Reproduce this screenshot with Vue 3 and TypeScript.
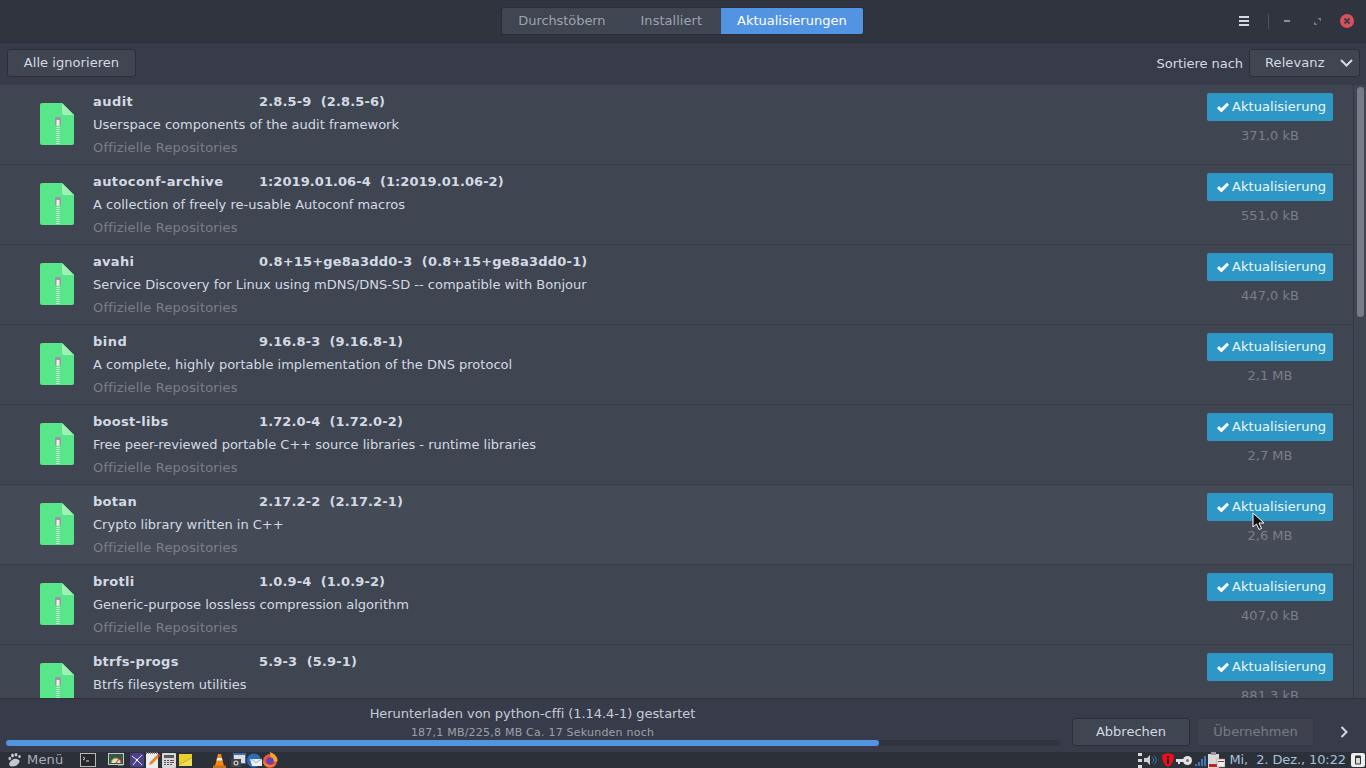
<script setup lang="ts">
interface Pkg { name: string; ver: string; desc: string; size: string; vs: number; ns?: number; hover?: boolean }
const pkgs: Pkg[] = [
  { name: 'audit', ver: '2.8.5-9  (2.8.5-6)', desc: 'Userspace components of the audit framework', size: '371,0 kB', vs: 0.13, ns: 0.45 },
  { name: 'autoconf-archive', ver: '1:2019.01.06-4  (1:2019.01.06-2)', desc: 'A collection of freely re-usable Autoconf macros', size: '551,0 kB', vs: 0.06, ns: 0.42 },
  { name: 'avahi', ver: '0.8+15+ge8a3dd0-3  (0.8+15+ge8a3dd0-1)', desc: 'Service Discovery for Linux using mDNS/DNS-SD -- compatible with Bonjour', size: '447,0 kB', vs: 0.2 },
  { name: 'bind', ver: '9.16.8-3  (9.16.8-1)', desc: 'A complete, highly portable implementation of the DNS protocol', size: '2,1 MB', vs: 0.1, ns: 0.5 },
  { name: 'boost-libs', ver: '1.72.0-4  (1.72.0-2)', desc: 'Free peer-reviewed portable C++ source libraries - runtime libraries', size: '2,7 MB', vs: 0.1 },
  { name: 'botan', ver: '2.17.2-2  (2.17.2-1)', desc: 'Crypto library written in C++', size: '2,6 MB', vs: 0.1, hover: true },
  { name: 'brotli', ver: '1.0.9-4  (1.0.9-2)', desc: 'Generic-purpose lossless compression algorithm', size: '407,0 kB', vs: 0.13 },
  { name: 'btrfs-progs', ver: '5.9-3  (5.9-1)', desc: 'Btrfs filesystem utilities', size: '881,3 kB', vs: 0.16 },
]
</script>

<template>
  <div class="app">
    <header class="titlebar">
      <div class="tabs">
        <span class="tab t1">Durchstöbern</span>
        <span class="tab t2">Installiert</span>
        <span class="tab active">Aktualisierungen</span>
      </div>
      <div class="winctl">
        <svg class="w-menu" width="10" height="10" viewBox="0 0 10 10"><path d="M0 1h10M0 5h10M0 9h10" stroke="#d3dae3" stroke-width="2" /></svg>
        <i class="sep"></i>
        <svg class="w-min" width="6" height="4" viewBox="0 0 6 4"><rect y="1" width="6" height="2" fill="#8a8f99" /></svg>
        <svg class="w-max" width="7" height="7" viewBox="0 0 7 7"><path d="M3.500 0H7v3.500zM0 3.500L3.500 7H0z" fill="#777c85" /></svg>
        <svg width="14" height="14" viewBox="0 0 14 14"><circle cx="7" cy="7" r="7" fill="#d9505a" /><path d="M4.500 4.500l5 5M9.500 4.500l-5 5" stroke="#3a3f4b" stroke-width="2" /></svg>
      </div>
    </header>

    <div class="toolbar">
      <button class="btn ignore">Alle ignorieren</button>
      <div class="sort">
        <span class="sortlabel">Sortiere nach</span>
        <div class="btn select">
          <span class="rel">Relevanz</span>
          <svg width="13" height="8" viewBox="0 0 13 8"><path d="M1 1l5.500 5.500L12 1" fill="none" stroke="#d3dae3" stroke-width="2" /></svg>
        </div>
      </div>
    </div>

    <main class="listwrap">
      <div class="list">
        <div v-for="p in pkgs" :key="p.name" class="row" :class="{ hover: p.hover }">
          <svg class="pkgicon" width="34" height="42" viewBox="0 0 34 42">
            <path d="M2 0H22L34 12V40a2 2 0 0 1-2 2H2a2 2 0 0 1-2-2V2a2 2 0 0 1 2-2z" fill="#58e68a" />
            <path d="M22 0L34 12H24a2 2 0 0 1-2-2z" fill="#a0f0b8" />
            <rect x="15" y="14" width="6" height="8" fill="#9a9a9a" />
            <rect x="16.500" y="17" width="3" height="5" fill="#eee" />
            <path d="M18 22V41" stroke="#d5dcd8" stroke-width="3.500" stroke-dasharray="1 1" />
          </svg>
          <div class="info">
            <div class="head">
              <b class="name" :style="{ letterSpacing: (p.ns ?? 0.3) + 'px' }">{{ p.name }}</b>
              <b class="ver" :style="{ letterSpacing: p.vs + 'px' }">{{ p.ver }}</b>
            </div>
            <div class="desc">{{ p.desc }}</div>
            <div class="repo">Offizielle Repositories</div>
          </div>
          <div class="action">
            <div class="update">
              <svg width="12" height="10" viewBox="0 0 12 10"><path d="M1 5.200l3.400 3.200L11 1.700" fill="none" stroke="#fff" stroke-width="3" /></svg>
              <span>Aktualisierung</span>
            </div>
            <div class="size">{{ p.size }}</div>
          </div>
        </div>
      </div>
      <div class="scroll"><div class="thumb"></div></div>
      <svg class="cursor" width="13" height="18" viewBox="0 0 13 18"><path d="M1 1v14l3.500-3 2.500 5.500 2.500-1L7 11h5z" fill="#111" stroke="#fff" stroke-width="1" /></svg>
    </main>

    <footer class="footer">
      <div class="progressinfo">
        <div class="status">
          <div class="st1">Herunterladen von python-cffi (1.14.4-1) gestartet</div>
          <div class="st2">187,1 MB/225,8 MB Ca. 17 Sekunden noch</div>
        </div>
        <div class="bar"><div class="fill" :style="{ width: '82.800%' }"></div></div>
      </div>
      <div class="actions">
        <button class="btn cancel">Abbrechen</button>
        <button class="btn apply">Übernehmen</button>
        <svg width="9" height="12" viewBox="0 0 9 12"><path d="M1.500 1l5 5-5 5" fill="none" stroke="#d3dae3" stroke-width="2" /></svg>
      </div>
    </footer>

    <nav class="taskbar">
      <svg class="ti paw" width="13" height="14" viewBox="0 0 13 14"><path d="M4 13.500c-3 0-3.500-2.500-2-4.500s4-4 7-3 3 2.500 1.500 4.500-3 3-6.500 3z" fill="#c4c8cd" /><ellipse cx="1.800" cy="5.500" rx="1.300" ry="1.800" fill="#c4c8cd" /><ellipse cx="4.500" cy="2.500" rx="1.400" ry="2" fill="#c4c8cd" /><ellipse cx="8" cy="1.800" rx="1.500" ry="1.800" fill="#c4c8cd" /><ellipse cx="11.500" cy="3.500" rx="1.300" ry="1.500" fill="#c4c8cd" /></svg>
      <span class="menu">Menü</span>
      <svg class="ti term" width="16" height="14" viewBox="0 0 16 14"><rect x=".5" y=".5" width="15" height="13" fill="#24282c" stroke="#b8b8b8" /><path d="M3 4l2 1.500L3 7M6 8h3" fill="none" stroke="#ddd" /></svg>
      <svg class="ti gauge" width="16" height="14" viewBox="0 0 16 14"><rect width="16" height="12" fill="#c8c8c8" /><rect x="1" y="1" width="14" height="10" fill="#35574a" /><path d="M3 10a5 5 0 0 1 10 0z" fill="#e8ddb0" /><path d="M3 10a5 5 0 0 1 5-5" fill="none" stroke="#6b9a4a" /><path d="M8 5a5 5 0 0 1 5 5" fill="none" stroke="#c8503c" /><path d="M8 10l3-4" stroke="#a33" /><rect x="10" y="12" width="5" height="1" fill="#777" /></svg>
      <svg class="ti net" width="14" height="14" viewBox="0 0 14 14"><rect width="14" height="14" rx="2" fill="#4e3f8c" /><path d="M2 3l5 4 5-5M7 7l-4 5M7 7l5 5" stroke="#e6e6f0" fill="none" /><circle cx="7" cy="7" r="1.200" fill="#fff" /></svg>
      <svg class="ti note" width="15" height="16" viewBox="0 0 15 16"><rect x="0" y="1" width="12" height="15" fill="#ededed" /><path d="M0 1h12" stroke="#777" stroke-width="2" stroke-dasharray="1 1" /><path d="M3 13l1-3 7-7 2 2-7 7z" fill="#e08a2c" /><path d="M11 3l1.500-1.500 2 2L13 5z" fill="#d83a3a" /></svg>
      <svg class="ti calc" width="14" height="15" viewBox="0 0 14 15"><rect width="14" height="15" rx="1" fill="#d8d8d8" /><rect x="2" y="2" width="10" height="3" fill="#5a5a5a" /><path d="M2 7.500h2m1 0h2m1 0h2m-8 2h2m1 0h2m1 0h2m-8 2h2m1 0h2m1 0h2" stroke="#555" /><path d="M10 7.500h2M10 9.500h2" stroke="#a33" /></svg>
      <svg class="ti sticky" width="13" height="12" viewBox="0 0 13 12"><rect width="13" height="12" fill="#e8cf2e" /><path d="M0 11L13 4" stroke="#9c8a1c" /><path d="M0 11l13-7v8H0z" fill="#f0dd58" /></svg>
      <svg class="ti vlc" width="13" height="15" viewBox="0 0 13 15"><path d="M5 1h3L11 13H2z" fill="#f08a1c" /><path d="M4.200 5h4.600l.6 2.500H3.600z" fill="#f4f0e8" /><path d="M0 12.500h13V15H0z" fill="#c8701a" /></svg>
      <svg class="ti cam" width="15" height="15" viewBox="0 0 15 15"><rect x="2" y="0" width="13" height="11" fill="#3a6ea8" /><rect x="3" y="2" width="11" height="8" fill="#ddd" /><rect y="6" width="10" height="8" fill="#444" /><circle cx="5" cy="10" r="2.500" fill="#ccc" /><circle cx="5" cy="10" r="1.200" fill="#333" /></svg>
      <svg class="ti bird" width="15" height="15" viewBox="0 0 15 15"><circle cx="7" cy="7.500" r="7" fill="#2c6fb8" /><path d="M3 6h12v7H5z" fill="#eaf0f6" /><path d="M4 6l5 3.500L15 6" fill="none" stroke="#9eb4c8" /></svg>
      <svg class="ti fox" width="16" height="16" viewBox="0 0 16 16"><circle cx="8" cy="9" r="7" fill="#e8583a" /><path d="M8 0c4 1.500 8 4.500 7.500 9.500H9z" fill="#f6a52e" /><circle cx="8" cy="9" r="3.800" fill="#6b3fa8" /><path d="M1 9c0 3 2 6 7 6 3 0 5-1 6-3-3 2-9 2-13-3z" fill="#f08030" /></svg>
      <div class="spacer"></div>
      <div class="tray">
        <svg width="4" height="15" viewBox="0 0 4 15"><path d="M2 0v15" stroke="#d8d8d8" stroke-width="4" stroke-dasharray="3 3" /></svg>
        <svg class="tr-sp" width="13" height="12" viewBox="0 0 13 12"><path d="M0 4h3l3-3v10L3 8H0z" fill="#cfcfcf" /><path d="M8 3c2 2 2 4 0 6M10 1.500c3 3 3 6 0 9" fill="none" stroke="#3f78b8" /></svg>
        <svg class="tr-sh" width="12" height="14" viewBox="0 0 12 14"><path d="M6 0l6 2c0 6-2 10-6 12C2 12 0 8 0 2z" fill="#e8101c" /><path d="M5 3h2v2H5zM5 6h2v5H5z" fill="#2a0a0a" /></svg>
        <svg class="tr-key" width="16" height="9" viewBox="0 0 16 9"><circle cx="11.500" cy="4.500" r="4.500" fill="#e4e4e4" /><circle cx="11.500" cy="4.500" r="1.500" fill="#777" /><rect y="3" width="9" height="3" fill="#e4e4e4" /><rect x="2" y="5" width="2" height="3" fill="#e4e4e4" /></svg>
        <svg class="tr-sig" width="11" height="11" viewBox="0 0 11 11"><path d="M0 9h2v2H0zM3 7h2v4H3zM6 4h2v7H6zM9 1h2v10H9z" fill="#3f78b8" /></svg>
        <svg class="tr-clip" width="17" height="16" viewBox="0 0 17 16"><rect y="2" width="11" height="14" fill="#d8d8d8" /><rect x="3" y="0" width="5" height="3" fill="#999" /><rect x="1" y="12" width="9" height="3" fill="#c02020" /><rect x="9" y="7" width="8" height="8" fill="#eee" stroke="#888" stroke-width=".5" /><rect x="10" y="9" width="6" height="1" fill="#a33" /></svg>
        <span class="clock">Mi,&nbsp;&nbsp;2. Dez., 10:22</span>
        <svg class="tr-tr" width="14" height="14" viewBox="0 0 14 14"><rect width="14" height="14" rx="2" fill="#eee" /><rect x="4" y="2.500" width="6" height="9" rx="1" fill="#333" /><rect x="5" y="5" width="4" height="5.500" fill="#ddd" /></svg>
      </div>
    </nav>
  </div>
</template>

<style scoped>
.app {
  width: 1366px;
  height: 768px;
  display: flex;
  flex-direction: column;
  overflow: hidden;
  background: #383c4a;
  color: #d3dae3;
  font: 13px/16px "DejaVu Sans", sans-serif;
}
.titlebar {
  flex: 0 0 43px;
  box-sizing: border-box;
  position: relative;
  display: flex;
  justify-content: center;
  align-items: flex-start;
  padding-top: 8px;
  background: #2f343f;
  border-bottom: 1px solid #2b2e39;
}
.tabs {
  display: flex;
  height: 26px;
  background: #404552;
  border-radius: 2px;
  box-shadow: 0 0 0 1px #2b2e39;
  color: #9da3ad;
  margin-left: -1px;
}
.tab { line-height: 16px; padding-top: 5px; padding-bottom: 5px; }
.t1 { padding-left: 16px; padding-right: 18px; letter-spacing: -.08px; }
.t2 { padding-left: 17px; padding-right: 19px; letter-spacing: .03px; }
.tab.active { padding-left: 16px; padding-right: 16px; background: #5294e2; color: #fff; border-radius: 0 2px 2px 0; }
.winctl {
  position: absolute;
  right: 12px;
  top: 14px;
  height: 14px;
  display: flex;
  align-items: center;
}
.w-menu { margin-right: 19px; }
.sep { width: 1px; height: 15px; background: #4c515c; margin-right: 15px; }
.w-min { margin-right: 24px; }
.w-max { margin-right: 19px; }

.toolbar {
  flex: 0 0 42px;
  box-sizing: border-box;
  display: flex;
  justify-content: space-between;
  align-items: flex-start;
  padding: 6px 6px 0 7px;
  background: #383c4a;
}
.btn {
  box-sizing: border-box;
  background: #404552;
  border: 1px solid #2b2e39;
  border-radius: 3px;
  color: #d3dae3;
  font: inherit;
  padding: 0;
}
.ignore { width: 129px; height: 28px; letter-spacing: .05px; }
.sort { display: flex; align-items: center; gap: 6px; }
.sortlabel { padding-top: 1px; letter-spacing: -.05px; }
.select {
  width: 111px;
  height: 28px;
  display: flex;
  align-items: center;
  justify-content: space-between;
  padding: 0 6px 0 15px;
}
.rel { letter-spacing: .1px; }

.listwrap {
  flex: 0 0 614px;
  position: relative;
  display: flex;
  overflow: hidden;
  background: #404552;
  border-bottom: 1px solid #2f323d;
  box-sizing: border-box;
}
.list { flex: 1; min-width: 0; }
.row {
  box-sizing: border-box;
  height: 80px;
  display: flex;
  padding: 0 20px 0 40px;
  border-bottom: 1px solid #383c48;
}
.row.hover { background: #454a57; }
.pkgicon { flex: none; margin-top: 18px; }
.info { flex: 1; margin-left: 19px; padding-top: 9px; }
.head { display: flex; height: 23px; }
.name { width: 166px; font-weight: 700; }
.ver { font-weight: 700; white-space: pre; }
.desc { height: 23px; letter-spacing: .005px; }
.repo { color: #7b7f88; letter-spacing: .18px; }
.action { flex: none; width: 126px; padding-top: 8px; text-align: center; }
.update {
  height: 28px;
  display: flex;
  align-items: center;
  gap: 3px;
  padding-left: 10px;
  border-radius: 2px;
  background: #2d98c5;
  color: #eef6fa;
  letter-spacing: .05px;
}
.size { margin-top: 7px; color: #7b7f88; }
.scroll {
  flex: 0 0 13px;
  box-sizing: border-box;
  border-left: 1px solid #353945;
  background: #404552;
}
.thumb {
  width: 7px;
  height: 230px;
  margin: 2px 0 0 3px;
  border-radius: 4px;
  background: #767b87;
}
.cursor { position: absolute; left: 1252px; top: 427px; }

.footer {
  flex: 0 0 53px;
  display: flex;
  background: #383c4a;
}
.progressinfo { width: 1066px; padding-left: 6px; box-sizing: border-box; }
.status { height: 35px; padding: 6px 7px 0 0; text-align: center; }
.st1 { color: #c6ccd6; line-height: 18px; letter-spacing: -.06px; }
.st2 { margin-top: 1px; color: #9ba1ab; font-size: 11px; line-height: 18px; letter-spacing: .22px; }
.bar { width: 1054px; height: 6px; border-radius: 3px; background: #2f343f; }
.fill { height: 100%; border-radius: 3px; background: #5294e2; }
.actions { display: flex; align-items: flex-start; padding: 19px 0 0 6px; }
.cancel { width: 118px; height: 28px; }
.apply { width: 117px; height: 28px; margin-left: 7px; color: #767b87; border-color: #363a47; background: #3e424f; }
.actions svg { margin: 8px 0 0 26px; }

.taskbar {
  flex: 0 0 16px;
  display: flex;
  align-items: center;
  background: #2c3038;
  color: #a9b0ba;
}
.ti { flex: none; }
.paw { margin-left: 8px; }
.menu { margin-left: 6px; width: 36px; letter-spacing: .2px; }
.term { margin-left: 17px; }
.gauge { margin-left: 12px; }
.net { margin-left: 6px; }
.note { margin-left: 2px; }
.calc { margin-left: 1px; }
.sticky { margin-left: 3px; }
.vlc { margin-left: 21px; }
.cam { margin-left: 5px; }
.bird { margin-left: 1px; }
.fox { margin-left: 0; }
.spacer { flex: 1; }
.tray { display: flex; align-items: center; padding-right: 1px; }
.tr-sp { margin-left: 2px; }
.tr-sh { margin-left: 5px; }
.tr-key { margin-left: 2px; }
.tr-sig { margin-left: 3px; }
.tr-clip { margin-left: 2px; }
.clock { margin-left: 4px; color: #a9c0dc; white-space: pre; letter-spacing: -.1px; }
.tr-tr { margin-left: 5px; }
</style>

<style>
html, body { margin: 0; background: #383c4a; }
</style>
